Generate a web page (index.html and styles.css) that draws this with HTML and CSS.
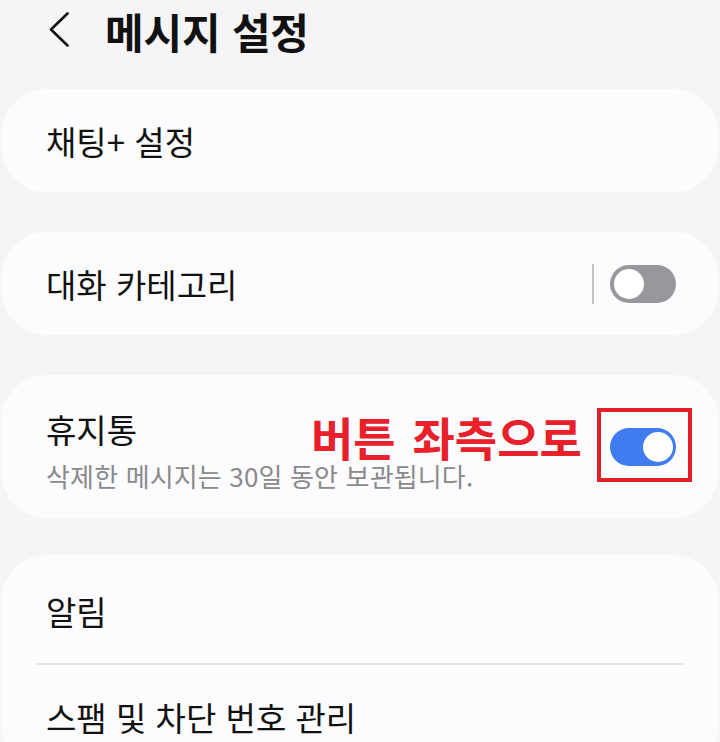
FILE: index.html
```html
<!DOCTYPE html>
<html lang="ko">
<head>
<meta charset="utf-8">
<title>메시지 설정</title>
<link rel="stylesheet" href="styles.css">
</head>
<body>
<header class="topbar">
  <svg class="back" width="24" height="36" viewBox="0 0 24 36" aria-hidden="true">
    <polyline points="20.5,1.5 4,17.5 20.5,33.5" fill="none" stroke="#111" stroke-width="2.6" stroke-linecap="round" stroke-linejoin="round"/>
  </svg>
  <h1 class="title">메시지 설정</h1>
</header>
<main class="list">
  <section class="card">
    <div class="row"><span class="label">채팅+ 설정</span></div>
  </section>
  <section class="card">
    <div class="row">
      <span class="label grow">대화 카테고리</span>
      <span class="vline"></span>
      <span class="switch off"><span class="thumb"></span></span>
    </div>
  </section>
  <section class="card card-tall">
    <div class="row row-tall">
      <div class="grow text-col">
        <div class="label">휴지통</div>
        <div class="sub">삭제한 메시지는 30일 동안 보관됩니다.</div>
      </div>
      <span class="switch on"><span class="thumb"></span></span>
    </div>
    <div class="note">버튼 좌측으로</div>
    <div class="note-box"></div>
  </section>
  <section class="card card-last">
    <div class="row"><span class="label">알림</span></div>
    <div class="divider"></div>
    <div class="row"><span class="label">스팸 및 차단 번호 관리</span></div>
  </section>
</main>
</body>
</html>
```

FILE: styles.css
```css
html, body {
  margin: 0;
  padding: 0;
}
body {
  width: 720px;
  height: 742px;
  overflow: hidden;
  background: #f5f5f7;
  font-family: "Noto Sans CJK KR", "Noto Sans", sans-serif;
  color: #111;
}
.topbar {
  height: 61px;
  display: flex;
  align-items: center;
  padding-left: 47px;
}
.back {
  display: block;
  margin-top: -2px;
}
.title {
  margin: 0 0 0 34px;
  font-size: 42px;
  font-weight: 700;
  line-height: 50px;
  letter-spacing: -0.2px;
}
.list {
  padding-top: 28px;
  display: flex;
  flex-direction: column;
  gap: 40px;
}
.card {
  position: relative;
  margin: 0 1px;
  background: #fcfcfe;
  border-radius: 46px;
}
.card-last {
  margin-top: -3px;
  padding-top: 4px;
}
.row {
  height: 103px;
  display: flex;
  align-items: center;
  padding: 0 43px 0 45px;
}
.card-last .row {
  height: 104px;
}
.row-tall {
  height: 143px;
}
.grow {
  flex: 1;
}
.label {
  font-size: 33px;
  line-height: 42px;
  color: #111;
}
.text-col {
  padding-top: 8px;
}
.sub {
  margin-top: 8px;
  font-size: 26px;
  line-height: 36px;
  letter-spacing: 0.15px;
  color: #8a8a8c;
}
.vline {
  width: 2px;
  height: 40px;
  background: #c4c4c6;
  margin-right: 16px;
}
.switch {
  position: relative;
  width: 66px;
  height: 38px;
  border-radius: 19px;
  flex: none;
}
.switch .thumb {
  position: absolute;
  top: 4px;
  width: 30px;
  height: 30px;
  border-radius: 50%;
  background: #fff;
}
.switch.off {
  background: #98989c;
}
.switch.off .thumb {
  left: 4px;
}
.switch.on {
  background: #3f7cf0;
}
.switch.on .thumb {
  right: 3px;
}
.divider {
  height: 2px;
  margin: 0 36px;
  background: #e0e0e2;
}
.note {
  position: absolute;
  left: 310px;
  top: 41px;
  font-size: 46px;
  line-height: 40px;
  font-weight: 700;
  color: #e8202a;
  word-spacing: 4px;
}
.note-box {
  position: absolute;
  left: 596px;
  top: 33px;
  width: 95px;
  height: 74px;
  box-sizing: border-box;
  border: 4px solid #e3202a;
}
```
